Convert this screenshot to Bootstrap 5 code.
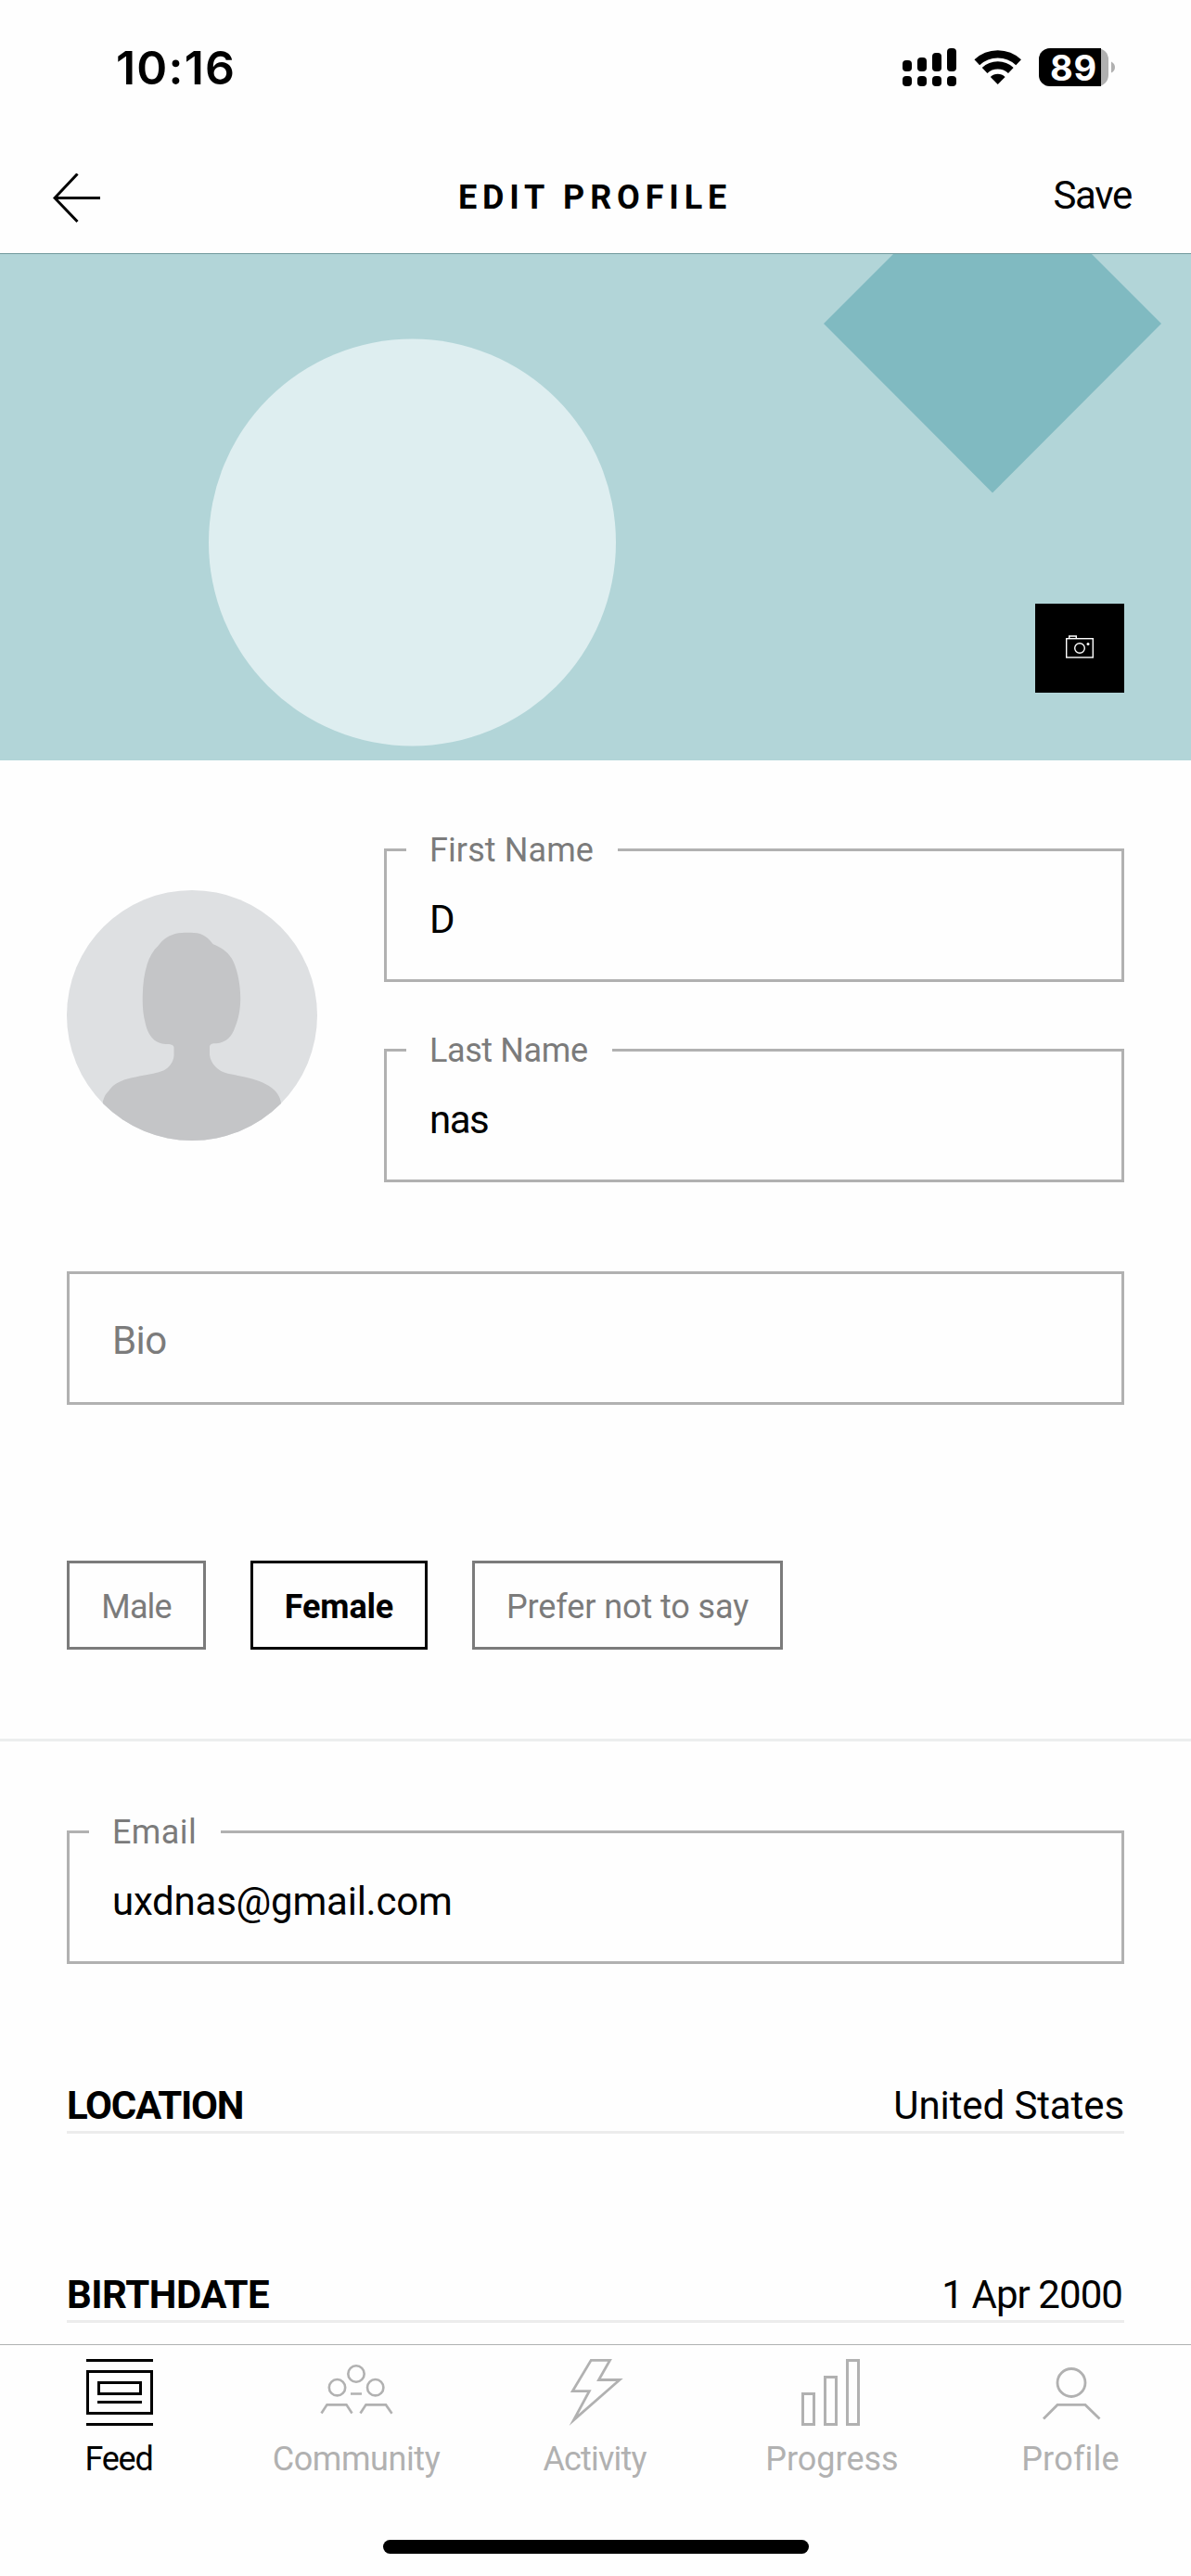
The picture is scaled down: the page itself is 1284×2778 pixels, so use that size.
<!DOCTYPE html>
<html lang="en">

<head>
    <meta charset="UTF-8">
    <meta name="viewport" content="width=device-width, initial-scale=1.0">
    <title>Edit Profile</title>
    <link href="https://cdn.jsdelivr.net/npm/bootstrap@5.3.0/dist/css/bootstrap.min.css" rel="stylesheet">
    <style>
        body {
            height: 2778px;
            background-color: #fefefe;
            color: #000;
            font-family: Roboto, "Liberation Sans", sans-serif;
            font-size: 42px;
            line-height: 57px;
        }

        svg {
            display: block;
            flex-shrink: 0;
        }

        .status-bar {
            height: 146px;
            padding: 0 82px 0 125px;
        }

        .status-time {
            font: 600 50px/60px Inter, sans-serif;
            letter-spacing: 1.2px;
        }

        .battery-text {
            font: 700 38px Inter, sans-serif;
            letter-spacing: .7px;
        }

        .top-bar {
            display: grid;
            grid-template-columns: 1fr auto 1fr;
            height: 128px;
            padding: 1px 61px 0 57px;
            border-bottom: 1px solid #71999c;
        }

        .top-title {
            padding-top: 6px;
            padding-left: 3px;
            font-size: 36px;
            font-weight: 700;
            letter-spacing: 5.84px;
        }

        .save-link {
            padding-top: 1px;
            padding-right: 3px;
            color: #000;
            letter-spacing: -1.3px;
        }

        .banner {
            height: 546px;
            background-color: #b2d5d8;
        }

        .camera-btn {
            right: 72px;
            bottom: 73px;
            width: 96px;
            height: 96px;
        }

        .px-page {
            padding-left: 72px;
            padding-right: 72px;
        }

        .profile-part {
            padding-top: 95px;
            padding-bottom: 96px;
            border-bottom: 3px solid #eceeee;
        }

        .gap-page {
            gap: 72px;
        }

        .field {
            height: 144px;
            border: 3px solid #b1b1b1;
            padding: 8px 46px 0;
        }

        .field-label {
            top: -29px;
            left: 21px;
            padding: 0 26px 0 25px;
            background-color: #fefefe;
            color: #7b7b7b;
            font-size: 36px;
            white-space: nowrap;
        }

        .bio-field {
            margin-top: 96px;
            padding-top: 5px;
            color: #7b7b7b;
            letter-spacing: -.6px;
        }

        .gender-row {
            gap: 48px;
            margin-top: 168px;
        }

        .gender-btn {
            --bs-btn-border-radius: 0;
            --bs-btn-color: #7b7b7b;
            --bs-btn-border-color: #7b7b7b;
            --bs-btn-border-width: 3px;
            --bs-btn-font-size: 36px;
            --bs-btn-padding-x: 0;
            --bs-btn-padding-y: 0;
            height: 96px;
            line-height: 94px;
        }

        .gender-btn.active {
            --bs-btn-active-color: #000;
            --bs-btn-active-bg: #fefefe;
            --bs-btn-active-border-color: #000;
            font-weight: 700;
        }

        .btn-male {
            width: 150px;
            letter-spacing: -.9px;
        }

        .btn-female {
            width: 191px;
            letter-spacing: -.15px;
        }

        .btn-none {
            width: 335px;
            letter-spacing: -.1px;
        }

        .account-part {
            padding-top: 96px;
        }

        .info-list {
            gap: 144px;
            margin-top: 123px;
        }

        .info-row {
            height: 60px;
            padding-top: 1px;
            border-bottom: 3px solid #ececec;
        }

        .tab-bar {
            display: grid;
            grid-template-columns: 258px 254px 260px 252px 260px;
            height: 211px;
            padding-top: 15px;
            border-top: 1px solid #b0b2b2;
        }

        .tab-link {
            color: #b1b1b1;
            font-size: 36px;
            text-decoration: none;
        }

        .tab-link.active {
            color: #000;
        }

        .tab-link span {
            margin-top: 8px;
            margin-right: 2px;
        }

        .home-indicator {
            width: 459px;
            height: 15px;
            margin-bottom: 24px;
        }

        .ls-name { letter-spacing: -1.5px; }
        .ls-first { letter-spacing: .1px; }
        .ls-last { letter-spacing: -.4px; }
        .ls-email { letter-spacing: .4px; }
        .ls-value { letter-spacing: -.23px; }
        .ls-country { letter-spacing: -.1px; }
        .ls-date { margin-right: 2px; letter-spacing: -.94px; }
        .ls-location { letter-spacing: -1.3px; }
        .ls-birth { letter-spacing: -.5px; }
        .ls-feed { letter-spacing: -1.2px; }
        .ls-community { letter-spacing: -.42px; }
        .ls-activity { letter-spacing: -.83px; }
        .ls-profile { letter-spacing: .2px; }
    </style>
</head>

<body class="d-flex flex-column overflow-hidden">
    <!-- Status bar -->
    <div class="status-bar d-flex align-items-center justify-content-between">
        <div class="status-time">10:16</div>
        <svg width="229" height="66" viewBox="973 40 229 66">
            <g fill="#000">
                <rect x="973" y="65" width="10" height="12" rx="4" />
                <rect x="989" y="62" width="10" height="15" rx="4" />
                <rect x="1005" y="57" width="10" height="20" rx="4" />
                <rect x="1021" y="52" width="10" height="25" rx="4" />
                <rect x="973" y="82" width="10" height="11" rx="4" />
                <rect x="989" y="82" width="10" height="11" rx="4" />
                <rect x="1005" y="82" width="10" height="11" rx="4" />
                <rect x="1021" y="82" width="10" height="11" rx="4" />
            </g>
            <g fill="none" stroke="#000" stroke-width="8.3">
                <path d="M1053.3 67.2A32.7 32.7 0 0 1 1098.1 67.2" />
                <path d="M1061.6 76A20.7 20.7 0 0 1 1089.8 76" />
            </g>
            <path d="M1075.7 91L1067.8 83A11.5 11.5 0 0 1 1083.6 83Z" />
            <rect x="1120" y="52" width="75" height="41" rx="12" fill="#b0b0b0" />
            <path d="M1187 52V93H1132A12 12 0 0 1 1120 81V64A12 12 0 0 1 1132 52Z" />
            <path d="M1198 66.5Q1202 68.500 1202 72.500Q1202 76.500 1198 78.500Z" fill="#b0b0b0" />
            <text x="1132" y="86.500" class="battery-text" fill="#fff">89</text>
        </svg>
    </div>

    <!-- Header -->
    <div class="top-bar align-items-center">
        <svg class="mt-2" width="52" height="54" viewBox="57 187 52 54" fill="none" stroke="#000" stroke-width="3">
            <path d="M59 213.500H108M83.500 187.500L59 213.500L83.500 239" />
        </svg>
        <div class="top-title">EDIT PROFILE</div>
        <a href="#" class="save-link text-decoration-none text-end">Save</a>
    </div>

    <!-- Cover -->
    <div class="banner position-relative">
        <svg width="1284" height="546" viewBox="0 274 1284 546">
            <circle cx="444.500" cy="585" r="219.500" fill="#deeef0" />
            <path d="M888 349L1070 167L1252 349L1070 531.500Z" fill="#80bac1" />
        </svg>
        <button type="button" class="camera-btn position-absolute bg-black border-0 p-0" aria-label="Change cover">
            <svg width="96" height="96" viewBox="0 0 96 96" fill="none" stroke="#fff" stroke-width="1.4">
                <rect x="33.700" y="37.700" width="28.600" height="20.300" />
                <path d="M36.700 37.700V35H44.300V37.700" />
                <circle cx="48" cy="48" r="5.300" />
                <circle cx="57" cy="43.500" r="1.500" fill="#fff" stroke="none" />
            </svg>
        </button>
    </div>

    <!-- Names, bio, gender -->
    <div class="profile-part">
        <div class="px-page">
            <div class="d-flex align-items-center gap-page">
                <svg width="270" height="270" viewBox="0 0 270 270">
                    <clipPath id="avatarClip">
                        <circle cx="135" cy="135" r="135" />
                    </clipPath>
                    <g clip-path="url(#avatarClip)">
                        <rect width="270" height="270" fill="#dee0e2" />
                        <path fill="#c4c5c7" d="M137 46C147 46 153 52 157.800 58.300C166 61.500 173 66 177.600 73.300C184 84 187.500 103 187.200 118C187 130 185 139 181.500 147.500C178 158 172 164.500 161 165.200C156 165 154.300 166 154 169V177.500C155 187 163 195.500 173.600 197.700L192 201.500C203 204 213 207 221 213.300C227 218 230 223 231 229.300V270H38.800V228.300C40 223 42 219.500 45 216.700C49 211 53 208 59 205.700C68 202 80 200.500 90.600 198.300C98 196.500 104 195.500 108.400 191.700C113 187.500 115 184 115.500 178V169.500C115 166.500 112 166 106.400 166C101 165.500 97.500 164 94.500 161.700C89 157 86 150 84.600 143C82 134 81.500 123 81.800 113C82 101 83.500 90 86.600 80C89 72 93 65 98.500 60C104 52 113 46.500 124 46C129 45.600 133 45.700 137 46Z" />
                    </g>
                </svg>
                <div class="d-flex flex-column flex-grow-1 gap-page">
                    <div class="field position-relative d-flex align-items-center">
                        <span class="field-label ls-first position-absolute">First Name</span>
                        <span>D</span>
                    </div>
                    <div class="field position-relative d-flex align-items-center">
                        <span class="field-label ls-last position-absolute">Last Name</span>
                        <span class="ls-name">nas</span>
                    </div>
                </div>
            </div>
            <div class="field bio-field d-flex align-items-center">Bio</div>
            <div class="gender-row d-flex">
                <button type="button" class="btn gender-btn btn-male">Male</button>
                <button type="button" class="btn gender-btn btn-female active">Female</button>
                <button type="button" class="btn gender-btn btn-none">Prefer not to say</button>
            </div>
        </div>
    </div>

    <!-- Account details -->
    <div class="account-part px-page flex-grow-1">
        <div class="field position-relative d-flex align-items-center">
            <span class="field-label ls-email position-absolute">Email</span>
            <span class="ls-value">uxdnas@gmail.com</span>
        </div>
        <div class="info-list d-flex flex-column">
            <div class="info-row d-flex justify-content-between">
                <span class="fw-bold ls-location">LOCATION</span>
                <span class="ls-country">United States</span>
            </div>
            <div class="info-row d-flex justify-content-between">
                <span class="fw-bold ls-birth">BIRTHDATE</span>
                <span class="ls-date">1 Apr 2000</span>
            </div>
        </div>
    </div>

    <!-- Tabs -->
    <nav class="tab-bar flex-shrink-0">
        <a href="#" class="tab-link active d-flex flex-column align-items-center">
            <svg width="72" height="72" fill="none" stroke="currentColor" stroke-width="3">
                <path d="M0 1.500H72M0 70.500H72M12 46.500H60" />
                <rect x="1.500" y="13.500" width="69" height="45" />
                <rect x="13.500" y="25.500" width="45" height="12" />
            </svg>
            <span class="ls-feed">Feed</span>
        </a>
        <a href="#" class="tab-link d-flex flex-column align-items-center">
            <svg width="80" height="72" viewBox="345 2544 80 72" fill="none" stroke="currentColor" stroke-width="2.600">
                <circle cx="384" cy="2560" r="8.700" />
                <circle cx="363.500" cy="2574.700" r="8.700" />
                <circle cx="404.700" cy="2574.700" r="8.700" />
                <path d="M378 2581.500H390M346.500 2602.500L352.500 2593.400H373.500L379.500 2602.500M388.500 2602.500L394.500 2593.400H416L422.500 2602.800" />
            </svg>
            <span class="ls-community">Community</span>
        </a>
        <a href="#" class="tab-link d-flex flex-column align-items-center">
            <svg width="72" height="72" viewBox="606 2544 72 72" fill="none" stroke="currentColor" stroke-width="2.800" stroke-miterlimit="10">
                <path d="M637.200 2545.400H657.500L645.500 2566.500H668L618.500 2609.800L635.300 2578.600H617.300Z" />
            </svg>
            <span class="ls-activity">Activity</span>
        </a>
        <a href="#" class="tab-link d-flex flex-column align-items-center">
            <svg width="72" height="72" viewBox="862 2544 72 72" fill="none" stroke="currentColor" stroke-width="3">
                <rect x="865.500" y="2581.500" width="12" height="33" />
                <rect x="889.500" y="2563.500" width="12" height="51" />
                <rect x="913.500" y="2545.500" width="12" height="69" />
            </svg>
            <span>Progress</span>
        </a>
        <a href="#" class="tab-link d-flex flex-column align-items-center">
            <svg width="72" height="72" viewBox="1118 2544 72 72" fill="none" stroke="currentColor" stroke-width="2.800">
                <circle cx="1155" cy="2569.500" r="15" />
                <path d="M1125 2608.500L1140 2593.400H1170L1185.500 2608.500" />
            </svg>
            <span class="ls-profile me-0">Profile</span>
        </a>
    </nav>
    <div class="home-indicator bg-black rounded-pill flex-shrink-0 mx-auto"></div>

    <script src="https://cdn.jsdelivr.net/npm/bootstrap@5.3.0/dist/js/bootstrap.bundle.min.js"></script>
</body>

</html>
